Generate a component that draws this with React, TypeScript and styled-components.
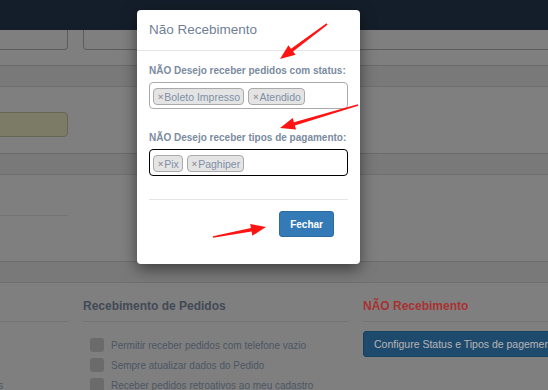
import React from "react";
import styled, { createGlobalStyle } from "styled-components";

const GlobalStyle = createGlobalStyle`
  html, body { margin: 0; padding: 0; background: #b7b7b7; }
  body { font-family: "Liberation Sans", Arial, sans-serif; overflow: hidden; }
  * { box-sizing: border-box; }
`;

const Page = styled.div`
  position: relative;
  width: 548px;
  height: 390px;
  overflow: hidden;
  background: #b7b7b7;
`;

const TopNav = styled.div`
  height: 30px;
  background: #1e2c3d;
`;

const Cols = styled.div<{ $cols?: string }>`
  display: grid;
  grid-template-columns: ${(p) => p.$cols ?? "265px 265px 265px"};
  column-gap: 15px;
  width: 825px;
  margin-left: -197px;
`;

const Input = styled.div`
  height: 20px;
  border: 1px solid #868686;
  border-top: none;
  border-radius: 0 0 4px 4px;
`;

const Band = styled.div<{ $mt: number }>`
  margin-top: ${(p) => p.$mt}px;
  height: 22px;
  background: #aeaeae;
  border-top: 1px solid #9a9a9a;
  border-bottom: 1px solid #a0a0a0;
`;

const Notice = styled.div`
  margin-top: 25px;
  height: 25px;
  background: #b1b192;
  border: 1px solid #929279;
  border-radius: 4px;
`;

const RuleRow = styled.div`
  height: 41px;
  border-bottom: 1px solid #a6a6a6;
`;

const Column = styled.div``;

const Heading = styled.h4<{ $danger?: boolean }>`
  margin: 0;
  padding: 14px 0 6px;
  height: 39px;
  font-size: 12px;
  line-height: 19px;
  font-weight: bold;
  color: ${(p) => (p.$danger ? "#f04848" : "#5f6a7b")};
  border-bottom: 1px solid #a6a6a6;
`;

const CheckList = styled.div`
  padding-top: 13px;
  display: flex;
  flex-direction: column;
`;

const CheckRow = styled.div`
  display: flex;
  align-items: center;
  height: 20px;
  padding-left: 7px;
  gap: 7px;
  font-size: 10px;
  color: #6e7b8e;
  white-space: nowrap;
`;

const Box = styled.span`
  width: 14px;
  height: 14px;
  flex: none;
  border-radius: 3px;
  background: #9a9a9a;
`;

const WideButton = styled.div`
  margin-top: 9px;
  height: 26px;
  display: inline-flex;
  align-items: center;
  padding: 0 10px;
  background: #2b6a9d;
  border: 1px solid #255d8a;
  border-radius: 3px;
  color: #fff;
  font-size: 10.5px;
  white-space: nowrap;
`;

const Backdrop = styled.div`
  position: absolute;
  inset: 0;
  background: rgba(0, 0, 0, 0.3);
`;

const Modal = styled.div`
  position: absolute;
  left: 137px;
  top: 10px;
  width: 223px;
  height: 254px;
  background: #fff;
  border-radius: 4px;
  box-shadow: 0 5px 15px rgba(0, 0, 0, 0.5);
`;

const ModalHeader = styled.div`
  padding: 11px 12px;
  height: 41px;
  border-bottom: 1px solid #e5e5e5;
  font-size: 13.5px;
  line-height: 18px;
  color: #6f7f97;
`;

const ModalBody = styled.div`
  padding: 12px 12px 0;
`;

const Label = styled.div<{ $mt?: number }>`
  margin-top: ${(p) => p.$mt ?? 0}px;
  font-size: 10px;
  line-height: 15px;
  font-weight: bold;
  color: #7b8ba0;
  white-space: nowrap;
`;

const SelectBox = styled.div<{ $focused?: boolean }>`
  margin-top: 4px;
  height: 27px;
  padding: 5px 3px;
  display: flex;
  gap: 4px;
  border: 1px solid ${(p) => (p.$focused ? "#000" : "#aaa")};
  border-radius: 4px;
`;

const Tag = styled.span`
  height: 17px;
  display: inline-flex;
  align-items: center;
  padding: 0 3px 0 4px;
  background: #e4e4e4;
  border: 1px solid #aaa;
  border-radius: 4px;
  font-size: 10.5px;
  color: #8090a6;
  white-space: nowrap;
`;

const TagX = styled.span`
  font-size: 9px;
  font-weight: bold;
  color: #999;
  margin-right: 1px;
`;

const ModalFooter = styled.div`
  margin: 23px 12px 0;
  padding: 11px 14px 0 0;
  border-top: 1px solid #e5e5e5;
  display: flex;
  justify-content: flex-end;
`;

const CloseButton = styled.button`
  height: 26px;
  padding: 0 10px;
  background: #337ab7;
  border: 1px solid #2e6da4;
  border-radius: 3px;
  color: #fff;
  font-family: inherit;
  font-size: 10px;
  font-weight: bold;
`;

const Annotations = styled.svg`
  position: absolute;
  inset: 0;
  pointer-events: none;
`;

type ArrowProps = { x1: number; y1: number; x2: number; y2: number };

const Arrow = ({ x1, y1, x2, y2 }: ArrowProps) => {
  const dx = x2 - x1;
  const dy = y2 - y1;
  const len = Math.hypot(dx, dy);
  const ux = dx / len;
  const uy = dy / len;
  const nx = -uy;
  const ny = ux;
  const head = 15;
  const headW = 6;
  const tail = 0.8;
  const shaft = 1.7;
  const bx = x2 - ux * head;
  const by = y2 - uy * head;
  const pts = [
    [x1 + nx * tail, y1 + ny * tail],
    [bx + nx * shaft, by + ny * shaft],
    [bx + nx * headW, by + ny * headW],
    [x2, y2],
    [bx - nx * headW, by - ny * headW],
    [bx - nx * shaft, by - ny * shaft],
    [x1 - nx * tail, y1 - ny * tail],
  ];
  return <polygon points={pts.map((p) => p.join(",")).join(" ")} fill="#ff1414" />;
};

const Tags = ({ items }: { items: string[] }) => (
  <>
    {items.map((t) => (
      <Tag key={t}>
        <TagX>×</TagX>
        {t}
      </Tag>
    ))}
  </>
);

export default function App() {
  return (
    <Page>
      <GlobalStyle />
      <TopNav />
      <Cols $cols="265px 545px">
        <Input />
        <Input />
      </Cols>
      <Band $mt={15} />
      <Cols>
        <Notice />
      </Cols>
      <Band $mt={16} />
      <Cols>
        <RuleRow />
      </Cols>
      <Band $mt={45} />
      <Cols>
        <Column>
          <Heading />
          <CheckList>
            <CheckRow>
              <Box />
            </CheckRow>
            <CheckRow>
              <Box />
            </CheckRow>
            <CheckRow>
              <Box />
              Ocultar valores nos pedidos impressos
            </CheckRow>
          </CheckList>
        </Column>
        <Column>
          <Heading>Recebimento de Pedidos</Heading>
          <CheckList>
            <CheckRow>
              <Box />
              Permitir receber pedidos com telefone vazio
            </CheckRow>
            <CheckRow>
              <Box />
              Sempre atualizar dados do Pedido
            </CheckRow>
            <CheckRow>
              <Box />
              Receber pedidos retroativos ao meu cadastro
            </CheckRow>
          </CheckList>
        </Column>
        <Column>
          <Heading $danger>NÃO Recebimento</Heading>
          <WideButton>Configure Status e Tipos de pagementos</WideButton>
        </Column>
      </Cols>

      <Backdrop />

      <Modal>
        <ModalHeader>Não Recebimento</ModalHeader>
        <ModalBody>
          <Label>NÃO Desejo receber pedidos com status:</Label>
          <SelectBox>
            <Tags items={["Boleto Impresso", "Atendido"]} />
          </SelectBox>
          <Label $mt={21}>NÃO Desejo receber tipos de pagamento:</Label>
          <SelectBox $focused>
            <Tags items={["Pix", "Paghiper"]} />
          </SelectBox>
        </ModalBody>
        <ModalFooter>
          <CloseButton>Fechar</CloseButton>
        </ModalFooter>
      </Modal>

      <Annotations width="548" height="390" viewBox="0 0 548 390">
        <Arrow x1={327} y1={24} x2={280} y2={59} />
        <Arrow x1={358} y1={105} x2={280} y2={128} />
        <Arrow x1={213} y1={237} x2={266} y2={227} />
      </Annotations>
    </Page>
  );
}
